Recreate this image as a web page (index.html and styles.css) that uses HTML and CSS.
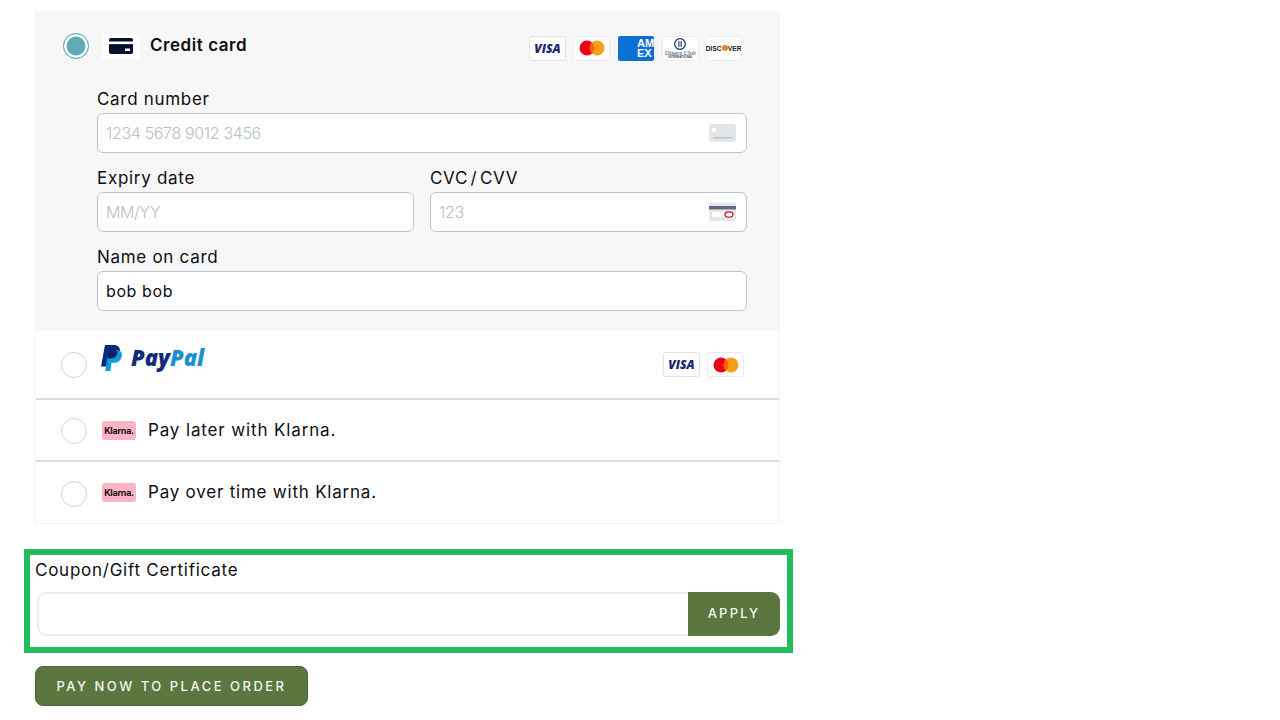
FILE: index.html
```html
<!DOCTYPE html>
<html lang="en">
<head>
<meta charset="utf-8">
<title>Payment</title>
<link rel="stylesheet" href="styles.css">
</head>
<body>
<main class="page">
  <section class="methods">
    <div class="panel">
      <div class="panel-head">
        <span class="radio radio-on"></span>
        <span class="card-logo">
          <svg width="24" height="16" viewBox="0 0 24 16"><rect width="24" height="16" rx="2" fill="#050f30"/><rect y="3.5" width="24" height="2.6" fill="#fff"/><rect x="16" y="10.5" width="5" height="2.5" fill="#fff"/></svg>
        </span>
        <span class="panel-title">Credit card</span>
        <div class="brands brands-card">
          <span class="brand brand-strong"><span class="visa">VISA</span></span>
          <span class="brand"><svg width="26" height="16" viewBox="0 0 26 16"><circle cx="8" cy="8" r="7.5" fill="#eb001b"/><circle cx="18" cy="8" r="7.5" fill="#f79e1b"/><path d="M13 2.4a7.5 7.5 0 0 1 0 11.2a7.5 7.5 0 0 1 0-11.2z" fill="#ff5f00"/></svg></span>
          <span class="amex"><span class="amex-text">AM<br>EX</span></span>
          <span class="brand"><span class="diners"><svg width="12" height="12" viewBox="0 0 14 14"><circle cx="7" cy="7" r="6.2" fill="none" stroke="#16356f" stroke-width="1.4"/><rect x="5" y="3.5" width="1.3" height="7" fill="#16356f"/><rect x="7.7" y="3.5" width="1.3" height="7" fill="#16356f"/></svg><span class="diners-name">Diners Club</span><span class="diners-sub">INTERNATIONAL</span></span></span>
          <span class="brand brand-last"><span class="discover">DISC<i class="dot"></i>VER</span></span>
        </div>
      </div>
      <form class="card-form">
        <div class="field">
          <label class="label">Card number</label>
          <div class="input">
            <span class="placeholder">1234 5678 9012 3456</span>
            <svg class="input-icon" width="27" height="18" viewBox="0 0 27 18"><rect width="27" height="18" rx="3" fill="#e3e6e8"/><rect x="3" y="4" width="4" height="4" fill="#fff"/><rect x="4" y="13" width="20" height="1.6" fill="#bfc6cb"/></svg>
          </div>
        </div>
        <div class="field-row">
          <div class="field">
            <label class="label">Expiry date</label>
            <div class="input"><span class="placeholder">MM/YY</span></div>
          </div>
          <div class="field">
            <label class="label label-tight">CVC / CVV</label>
            <div class="input">
              <span class="placeholder">123</span>
              <svg class="input-icon" width="27" height="18" viewBox="0 0 27 18"><rect width="27" height="18" rx="2" fill="#e3e6e8"/><rect y="3" width="27" height="3.4" fill="#5d6880"/><rect x="3" y="9" width="13" height="5" fill="#fff"/><ellipse cx="20" cy="11.5" rx="4" ry="2.6" fill="#fff" stroke="#c8102e" stroke-width="1.2"/></svg>
            </div>
          </div>
        </div>
        <div class="field">
          <label class="label">Name on card</label>
          <div class="input"><span class="value">bob bob</span></div>
        </div>
      </form>
    </div>
    <div class="method method-paypal">
      <span class="radio"></span>
      <span class="paypal">
        <svg width="23" height="26" viewBox="0 0 23 26"><path d="M5 0h8.500c4.500 0 7 2.500 6.300 6.500c-.8 4.700-3.900 7-8.300 7H8l-1.300 8H1z" fill="#012a7c"/><path d="M8.500 5h7.500c4 0 6.500 2 5.800 6c-.8 4.500-3.800 6.800-8 6.800h-2.300L10.300 26H5.300z" fill="#0a9bdc"/><path d="M8.500 5h7.800c1.700 2 1.300 4-.0 5.800c-1.500 2-3.500 2.700-5.800 2.700H7.200z" fill="#0c1f68"/></svg>
        <span class="paypal-word"><span class="pp-dark">Pay</span><span class="pp-light">Pal</span></span>
      </span>
      <div class="brands brands-paypal">
        <span class="brand brand-strong"><span class="visa">VISA</span></span>
        <span class="brand"><svg width="26" height="16" viewBox="0 0 26 16"><circle cx="8" cy="8" r="7.500" fill="#eb001b"/><circle cx="18" cy="8" r="7.500" fill="#f79e1b"/><path d="M13 2.400a7.500 7.500 0 0 1 0 11.200a7.500 7.500 0 0 1 0-11.200z" fill="#ff5f00"/></svg></span>
      </div>
    </div>
    <div class="method method-klarna">
      <span class="radio"></span>
      <span class="klarna">Klarna.</span>
      <span class="method-label">Pay later with Klarna.</span>
    </div>
    <div class="method method-klarna method-last">
      <span class="radio"></span>
      <span class="klarna">Klarna.</span>
      <span class="method-label">Pay over time with Klarna.</span>
    </div>
  </section>
  <section class="coupon">
    <label class="label coupon-label">Coupon/Gift Certificate</label>
    <div class="coupon-row">
      <div class="coupon-input"></div>
      <button class="apply" type="button">APPLY</button>
    </div>
  </section>
  <button class="pay" type="button">PAY NOW TO PLACE ORDER</button>
</main>
</body>
</html>
```
FILE: styles.css
```css
* { box-sizing: border-box; }
html, body { margin: 0; padding: 0; background: #fff; }
body { font-family: Inter, "Liberation Sans", sans-serif; color: #0d0d12; overflow: hidden; height: 720px; }
.page { width: 745px; margin-left: 35px; padding-top: 11px; }
.methods { border: 1px solid #f2f2f2; border-top: 0; }
.panel { background: #f7f7f8; margin: 0 -1px; height: 320px; padding: 22px 33px 0 28px; }
.panel-head { display: flex; align-items: center; height: 26px; }
.radio { flex: none; width: 26px; height: 26px; border-radius: 50%; border: 1px solid #d4d4d4; background: #fff; }
.radio-on { border-color: #5fabb6; background: #5fabb6; box-shadow: inset 0 0 0 2.500px #fff; }
.card-logo { width: 38px; height: 25px; margin: 0 10px 0 13px; background: #fff; display: flex; align-items: center; justify-content: center; }
.panel-title { font-size: 17px; font-weight: 600; letter-spacing: .55px; position: relative; top: -1px; }
.brands { margin-left: auto; display: flex; }
.brands-card { gap: 7px; margin-right: 5px; position: relative; top: 2px; }
.brand-last { margin-left: -1px; }
.brands-paypal { gap: 7px; margin-right: 35px; }
.brand { width: 37px; height: 25px; border: 1px solid #ececee; border-radius: 3px; background: #fff; display: flex; align-items: center; justify-content: center; overflow: hidden; }
.brand-strong { border: 1.500px solid #dfe2e8; }
.visa { color: #1a2470; font: italic 800 12px "Open Sans", sans-serif; }
.amex { width: 36px; height: 25px; margin: 0 1px; background: #0b6fd6; border-radius: 2px; display: flex; justify-content: flex-end; }
.amex-text { color: #fff; font: 700 11px/10px "Liberation Sans", sans-serif; padding-top: 2px; width: 17px; }
.diners { display: flex; flex-direction: column; align-items: center; line-height: 1; }
.diners-name { font: 6.500px/6px "Liberation Serif", serif; color: #3a4a6a; }
.diners-sub { font: 700 3px/3px "Liberation Sans", sans-serif; color: #3a4a6a; }
.discover { font: 800 6.800px "Liberation Sans", sans-serif; color: #222; display: flex; align-items: center; }
.dot { width: 6px; height: 6px; border-radius: 50%; background: #f08020; }
.card-form { margin: 29px 0 0 34px; display: flex; flex-direction: column; gap: 14px; }
.field { display: flex; flex-direction: column; flex: 1; min-width: 0; }
.field-row { display: flex; gap: 16px; }
.label { font-size: 17px; line-height: 22px; height: 25px; letter-spacing: .7px; display: block; }
.label-tight { word-spacing: -3px; }
.input { height: 40px; border: 1px solid #bcc5c9; border-radius: 6px; background: #fff; display: flex; align-items: center; justify-content: space-between; padding: 0 10px 0 8px; }
.placeholder { color: #b8c0c6; font-size: 16px; font-weight: 300; letter-spacing: -.35px; }
.value { font-size: 16px; letter-spacing: .6px; }
.method { display: flex; align-items: center; padding-left: 25px; background: #fff; }
.method-paypal { height: 69px; border-bottom: 2px solid #dcdcdc; }
.method-klarna { height: 62px; border-bottom: 2px solid #dcdcdc; }
.method-klarna .radio { margin-top: 2px; }
.method-last { height: 61px; border-bottom: 0; }
.method-last .radio { margin-top: 3px; }
.paypal { display: flex; align-items: center; gap: 8px; margin-left: 13px; position: relative; top: -7px; }
.paypal-word { font: italic 800 22px "Open Sans", sans-serif; margin-bottom: 2px; }
.pp-dark { color: #0f2a78; }
.pp-light { color: #1b8fd3; }
.klarna { flex: none; width: 34px; height: 19px; margin: 0 12px 0 15px; background: #ffb3c7; border-radius: 3px; font: 700 9px/19px Inter, sans-serif; letter-spacing: -.3px; text-align: center; color: #17120f; }
.method-label { font-size: 17px; letter-spacing: .86px; }
.method-last .method-label { letter-spacing: .78px; margin-bottom: 1px; }
.coupon { width: 769px; height: 104px; margin: 25px 0 0 -11px; border: 6px solid #23bb5b; padding: 4px 7px 0 5px; }
.coupon-label { height: 33px; letter-spacing: .75px; }
.coupon-row { display: flex; height: 44px; padding-left: 2px; }
.coupon-input { flex: 1; border: 2px solid #ececec; border-right: 0; border-radius: 9px 0 0 9px; }
.apply { width: 92px; border: 0; border-radius: 0 9px 9px 0; background: #5b763f; color: #f4f6ef; font: 500 13px "Inter", sans-serif; letter-spacing: 2.200px; padding: 0 0 2px; }
.pay { display: block; width: 273px; height: 40px; margin-top: 13px; border: 1px solid #4c6633; border-radius: 8px; background: #5b763f; color: #f4f6ef; font: 500 13px "Inter", sans-serif; letter-spacing: 2.500px; padding: 0; }
```
